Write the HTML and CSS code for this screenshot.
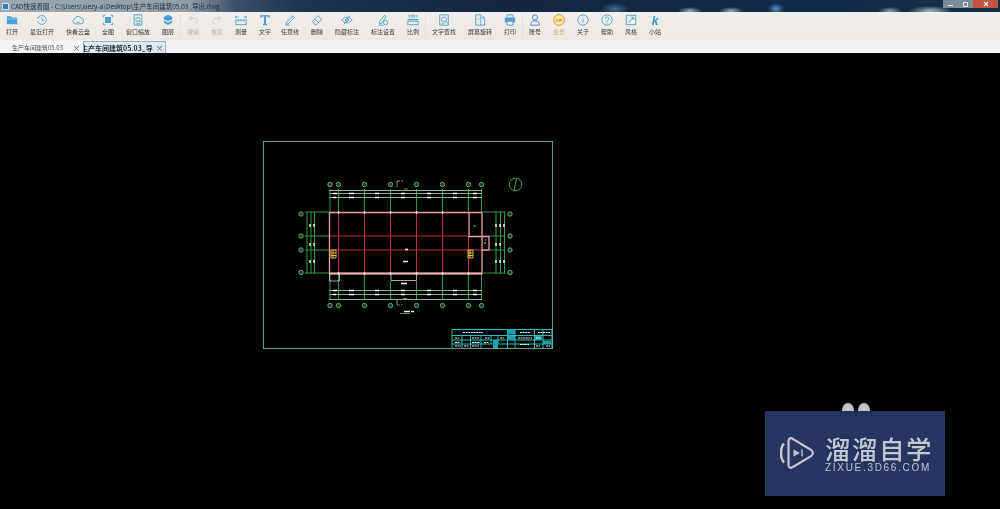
FILE: index.html
```html
<!DOCTYPE html>
<html lang="zh">
<head>
<meta charset="utf-8">
<title>CAD快速看图</title>
<link rel="stylesheet" href="styles.css">
</head>
<body>
<div class="app">
  <header class="titlebar">
    <span class="appicon"></span>
    <span class="titletext">CAD快速看图 - C:\Users\xiezy-a\Desktop\生产车间建筑05.03_导出.dwg</span>
    <div class="winctl"><span class="wbtn"><i class="glyphmin"></i></span><span class="wbtn"><i class="glyphmax"></i></span><span class="wbtn close"><svg class="glyphx" viewBox="0 0 6 6"><path d="M1 1l4 4M5 1L1 5"/></svg></span></div>
  </header>

  <nav class="toolbar">
    <div class="tool"><svg class="ic" viewBox="0 0 14 14"><path class="solid" d="M1 2.500h4.500L7 4h6v8H1z"/><path d="M1 5.800h12" class="lite"/></svg><span>打开</span></div>
    <div class="tool"><svg class="ic" viewBox="0 0 14 14"><path d="M2.300 4.500A5.200 5.200 0 1 1 1.800 8"/><path d="M1 3.500l1.200 1.500 1.600-1"/><path d="M7 4v3.400h2.600"/></svg><span>最近打开</span></div>
    <div class="tool"><svg class="ic" viewBox="0 0 14 14"><path d="M4 11.500a3 3 0 0 1-.6-5.900 3.800 3.800 0 0 1 7.300-.3 3.100 3.100 0 0 1-.2 6.200z"/><path d="M5 9c1 1.200 3 1.200 4 0"/></svg><span>快看云盘</span></div>
    <div class="tool"><svg class="ic" viewBox="0 0 14 14"><rect class="solid" x="3.500" y="3.500" width="7" height="7"/><path d="M1.500 4V1.500H4M10 1.500h2.500V4M12.500 10v2.500H10M4 12.500H1.500V10"/></svg><span>全图</span></div>
    <div class="tool"><svg class="ic" viewBox="0 0 14 14"><path d="M2.500 1h9v12h-9z"/><circle cx="7" cy="6.500" r="2.500"/><path d="M8.800 8.300l2 2M4.500 11.500h5"/></svg><span>窗口缩放</span></div>
    <div class="tool"><svg class="ic" viewBox="0 0 14 14"><path class="solid" d="M7 1l5 2.500V6L7 8.500 2 6V3.500z"/><path class="solid" d="M2 7.500l5 2.500 5-2.500V10l-5 2.800L2 10z"/></svg><span>图层</span></div>
    <i class="sep"></i>
    <div class="tool off"><svg class="ic" viewBox="0 0 14 14"><path d="M6 2L2.500 5 6 8"/><path d="M2.500 5H9a3 3 0 0 1 2.500 4.500L9.500 12"/></svg><span>撤销</span></div>
    <div class="tool off"><svg class="ic" viewBox="0 0 14 14"><path d="M8 2l3.500 3L8 8"/><path d="M11.500 5H5a3 3 0 0 0-2.500 4.500L4.500 12"/></svg><span>恢复</span></div>
    <div class="tool"><svg class="ic" viewBox="0 0 14 14"><path d="M1 2v3M13 2v3M1 3.500h3M10 3.500h3"/><rect x="1" y="7" width="12" height="5.500"/><path d="M4 7v2M7 7v2M10 7v2"/></svg><span>测量</span></div>
    <div class="tool"><svg class="ic" viewBox="0 0 14 14"><path class="solid" d="M1.500 1.500h11v3h-1.200l-.6-1.500H8.200v8.500l1.300.5V13H4.500v-1l1.300-.5V3H3.300l-.6 1.500H1.500z"/></svg><span>文字</span></div>
    <div class="tool narrow"><svg class="ic" viewBox="0 0 14 14"><path d="M3 9.500L10 2l2 2-7 7.500-2.500.8z"/><path d="M9 3.200l2 2M1.500 13h5"/></svg><span>任意线</span></div>
    <div class="tool gapped"><svg class="ic" viewBox="0 0 14 14"><path d="M1.800 8.500L8 2l4.500 4-6 6.500H4.500z"/><path d="M4.500 5.800L9 10"/></svg><span>删除</span></div>
    <div class="tool wide"><svg class="ic" viewBox="0 0 14 14"><path d="M1 7c3-4.500 9-4.500 12 0-3 4.500-9 4.500-12 0z"/><circle cx="7" cy="7" r="1.800"/><path d="M3.500 12L10.500 2"/></svg><span>隐藏标注</span></div>
    <div class="tool wide"><svg class="ic" viewBox="0 0 14 14"><path d="M3 9L8.500 1.500l2 1.500L6 10.500l-3 1z"/><circle cx="10" cy="10" r="2.500"/><path d="M1.500 13h6"/></svg><span>标注设置</span></div>
    <div class="tool"><svg class="ic" viewBox="0 0 14 14"><path d="M2.500 1v3M11.500 1v3M6 1.500h2M6 3.500h2M5 1v3M9 1v3"/><path class="thick" d="M1 6.500h12"/><rect x="1" y="8.500" width="12" height="4"/></svg><span>比例</span></div>
    <i class="sep"></i>
    <div class="tool wide"><svg class="ic" viewBox="0 0 14 14"><path d="M2 1h10v12H2z"/><circle cx="7" cy="6.500" r="3"/><path d="M9 8.800l2.400 2.400M4 11.500h3"/></svg><span>文字查找</span></div>
    <div class="tool wide"><svg class="ic" viewBox="0 0 14 14"><path d="M2 1h6v12H2z"/><path d="M8 4.500h4.500V13H8"/><path d="M4 6h2M10 2.500l1.500 1"/></svg><span>屏幕旋转</span></div>
    <div class="tool"><svg class="ic" viewBox="0 0 14 14"><path d="M3.500 4V1h7v3"/><rect class="solid" x="1" y="4" width="12" height="6" rx="1"/><path d="M3.500 8.500h7V13h-7z" class="paper"/></svg><span>打印</span></div>
    <i class="sep"></i>
    <div class="tool acct"><svg class="ic" viewBox="0 0 14 14"><circle cx="7" cy="4" r="3"/><path d="M1.800 13c0-3 1.500-5 5.200-5s5.200 2 5.200 5z"/></svg><span>账号</span></div>
    <div class="tool vip"><svg class="ic" viewBox="0 0 14 14"><circle cx="7" cy="7" r="6.300"/><text x="7" y="9" text-anchor="middle">VIP</text></svg><span>会员</span></div>
    <div class="tool"><svg class="ic" viewBox="0 0 14 14"><circle cx="7" cy="7" r="6"/><path d="M7 6v4.200M7 3.500v1"/></svg><span>关于</span></div>
    <div class="tool"><svg class="ic" viewBox="0 0 14 14"><circle cx="7" cy="7" r="6"/><path d="M5 5.500a2 2 0 1 1 3 1.700c-.7.400-1 .8-1 1.800M7 10v1"/></svg><span>帮助</span></div>
    <div class="tool"><svg class="ic" viewBox="0 0 14 14"><rect x="1.500" y="1.500" width="11" height="11"/><path d="M4 10l6-6M7 3.800h3.200V7"/></svg><span>风格</span></div>
    <div class="tool kay"><svg class="ic" viewBox="0 0 14 14"><text x="7" y="12.500" text-anchor="middle">k</text></svg><span>小站</span></div>
  </nav>

  <div class="tabs">
    <div class="tab"><span class="tabname">生产车间建筑05.03</span><span class="tabx">×</span></div>
    <div class="tab current"><span class="tabname">生产车间建筑05.03_导</span><span class="tabx">×</span></div>
  </div>

  <main class="canvas">
    <svg class="sheet" viewBox="0 53 1000 456" aria-hidden="true">
      <rect class="frame" x="263.500" y="141.500" width="289" height="207"/>

      <!-- axes -->
      <path class="axis" d="M330 189V212M338.500 189V212M364.500 189V212M390.500 189V212M416.500 189V212M442.500 189V212M468.500 189V212M481.500 189V212"/>
      <path class="axis" d="M330 274V300M338.500 274V300M364.500 274V300M390.500 281V300M416.500 281V300M442.500 274V300M468.500 274V300M481.500 274V300"/>
      <path class="axis" d="M305 212H329M305 236H329M305 250H329M305 273H329M483 212H505M490 236H505M490 250H505M483 273H505"/>
      <path class="axis" d="M307 212V274M311 212V274M314.500 212V274M496 212V274M500.500 212V274M504.500 212V274"/>
      <path class="dim" d="M329 190.500H482M329 193.500H482M329 197.500H482M329 290.500H482M329 294.500H482M329 299.500H482"/>
      <g class="bub">
        <circle cx="330" cy="184.500" r="2.200"/><circle cx="338.500" cy="184.500" r="2.200"/><circle cx="364.500" cy="184.500" r="2.200"/><circle cx="390.500" cy="184.500" r="2.200"/><circle cx="416.500" cy="184.500" r="2.200"/><circle cx="442.500" cy="184.500" r="2.200"/><circle cx="468.500" cy="184.500" r="2.200"/><circle cx="481.500" cy="184.500" r="2.200"/>
        <circle cx="330" cy="305.500" r="2.200"/><circle cx="338.500" cy="305.500" r="2.200"/><circle cx="364.500" cy="305.500" r="2.200"/><circle cx="390.500" cy="305.500" r="2.200"/><circle cx="416.500" cy="305.500" r="2.200"/><circle cx="442.500" cy="305.500" r="2.200"/><circle cx="468.500" cy="305.500" r="2.200"/><circle cx="481.500" cy="305.500" r="2.200"/>
        <circle cx="301" cy="214" r="2.200"/><circle cx="301" cy="236" r="2.200"/><circle cx="301" cy="250" r="2.200"/><circle cx="301" cy="272.500" r="2.200"/>
        <circle cx="510" cy="214" r="2.200"/><circle cx="510" cy="236" r="2.200"/><circle cx="510" cy="250" r="2.200"/><circle cx="510" cy="272.500" r="2.200"/>
      </g>
      <circle class="north" cx="515.500" cy="184.500" r="6.300"/>
      <path class="northmark" d="M514 190L516.500 179"/>

      <!-- white dimension ticks -->
      <path class="tick" d="M333 193.500h4M333 197.500h3M349 193.500h5M349 197.500h5M375 193.500h4M375 197.500h4M401 193.500h4M401 197.500h4M427 193.500h4M427 197.500h4M453 193.500h4M453 197.500h4M473 193.500h4M473 197.500h4"/>
      <path class="tick" d="M333 290.500h4M333 294.500h3M349 290.500h5M349 294.500h5M375 290.500h4M375 294.500h4M401 290.500h4M401 294.500h4M427 290.500h4M427 294.500h4M453 290.500h4M453 294.500h4M473 290.500h4M473 294.500h4"/>
      <path class="tick" d="M310 224v3M314 224v3M310 243v3M314 243v3M310 260v3M314 260v3M496 224v3M500 224v3M504 224v3M496 243v3M500 243v3M496 260v3M500 260v3M504 260v3"/>

      <!-- grid of the plan -->
      <path class="grid" d="M338.500 212V274M364.500 212V274M390.500 212V274M416.500 212V274M442.500 212V274M468.500 236V274M329 236H468M329 250H482"/>
      <path class="wall" d="M329.500 212.500H482V273.500H329.500Z"/>
      <path class="wallbase" d="M329 273.500H482"/>
      <path class="wall" d="M469 212.500V236.500H489V250H482"/>
      <path class="nodes" d="M338.500 211v3M364.500 211v3M390.500 211v3M416.500 211v3M442.500 211v3M338.500 272v3M364.500 272v3M390.500 272v3M416.500 272v3M442.500 272v3M468.500 272v3"/>
      <path class="wallthin" d="M329.500 274V281H339.500V274M391 274V280.500H416.500V274"/>
      <path class="stair" d="M331 250h5v8h-5zM333 250v8M331 253h5M331 255.500h5M468 250h5v8h-5zM470 250v8M468 253h5M468 255.500h5"/>
      <path class="note" d="M403 261.500h5M405 249.500h3M401 283.500h6M404 311.500h6M411 311.500h3"/>
      <path class="notedim" d="M473.500 226h2M484 243h2M485 240h1"/>
      <path class="section" d="M397 187v-6h3M402 180v2M397 300v5h3M402 304v1"/>
      <path class="underline" d="M404 189h4M403 298.500h4M400 313.500h10"/>

      <!-- title block -->
      <g class="block">
        <path d="M452 329.500H552V348M452 329.500V348M452 335.500H552M452 340H552M452 344H552M507.500 329.500V348M515 329.500V348M534.500 329.500V348M543 329.500V348M462 335.500V348M470.500 335.500V348M481 335.500V348M491 335.500V344M498 335.500V344"/>
      </g>
      <path class="blockfill" d="M507.500 329.500h7.500v5h-7.500zM507.500 336h7.500v4h-7.500zM493 340h5v8h-5zM534.500 336h7v4h-7zM543 341h8v3h-8z"/>
      <path class="blocktext" d="M463 332.500h20M520 332.500h10M538 332.500h12M472 338h7M485 338h5M500 338h4M518 338h14M472 342.500h8M484 342.500h5M455 338h4M455 342.500h5M455 346h6M464 346h5M472 346h7M520 344.500h9M536 338h6M546 346h4M536 346h4"/>
    </svg>

    <aside class="mark">
      <span class="ear left"></span><span class="ear right"></span>
      <svg class="marklogo" viewBox="0 0 34 32"><path class="marc" d="M4 6.500C1.500 9 1 12 1 16s.5 7 3 9.500"/><path d="M8.500 4c0-2.500 2-3.500 4-2.300l18.500 11.200c2.500 1.600 2.500 4.600 0 6.200L12.500 30.300c-2 1.200-4 .2-4-2.300z"/><path class="mfill" d="M13.500 12.500l6.500 3.500-6.500 3.500z"/><path class="mbar" d="M22 12.500v7"/></svg>
      <div class="marktext">
        <div class="markcn">溜溜自学</div>
        <div class="marken">ZIXUE.3D66.COM</div>
      </div>
    </aside>
  </main>
</div>
</body>
</html>
```
FILE: styles.css
```css
* { box-sizing: border-box; }
html, body { margin: 0; height: 100%; background: #000; overflow: hidden; }
body { font-family: "Noto Sans CJK SC", "Liberation Sans", sans-serif; }
.app { display: flex; flex-direction: column; width: 1000px; height: 509px; }

.titlebar {
  height: 12px; flex: none; display: flex; align-items: center; position: relative;
  padding-left: 2px; color: #2a3038; font-size: 6.5px; overflow: hidden;
  background:
    radial-gradient(ellipse 12px 4px at 690px 11px, #8fb1cf, transparent),
    radial-gradient(ellipse 12px 4px at 731px 11px, #8fb1cf, transparent),
    radial-gradient(ellipse 8px 6px at 776px 9px, #4f8fc4, transparent),
    radial-gradient(ellipse 12px 4px at 890px 11px, #7fa3bf, transparent),
    radial-gradient(ellipse 22px 5px at 930px 11px, #9dbdb8, transparent),
    radial-gradient(ellipse 14px 6px at 615px 9px, #3f6a90, transparent),
    linear-gradient(90deg, #9aa8b3 0, #8d9dab 190px, #3b4f68 235px, #1c3553 300px, #13263f 500px, #122a4a 800px, #182f4a 100%);
}
.appicon { width: 7px; height: 7px; background: #3a78b8; border: 1px solid #cfe0ee; flex: none; margin-right: 2px; }
.titletext { white-space: nowrap; filter: blur(.3px); }
.winctl { position: absolute; right: 2px; top: 0; height: 8px; display: flex; }
.wbtn { width: 15px; background: #7d8d98; display: flex; align-items: center; justify-content: center; }
.wbtn.close { width: 25px; background: #c4543f; }
.glyphmin { width: 5px; height: 1px; background: #eee; margin-top: 2px; }
.glyphmax { width: 5px; height: 5px; border: 1px solid #dde; }
.glyphx { width: 6px; height: 6px; fill: none; stroke: #f3f3f3; stroke-width: 1.200; }

.toolbar {
  height: 28px; flex: none; display: flex; align-items: flex-start;
  background: linear-gradient(#f2efeb, #ece9e4); filter: blur(.4px);
}
.tool { width: 24px; flex: none; display: flex; flex-direction: column; align-items: center; color: #33373c; font-size: 6px; line-height: 8px; white-space: nowrap; padding-top: 2px; }
.tool:nth-of-type(2), .tool:nth-of-type(3), .tool:nth-of-type(5), .tool.wide { width: 36px; }
.tool.narrow { width: 26px; }
.tool.gapped { margin-left: 2px; }
.sep { width: 1px; height: 24px; margin-top: 2px; background: #e3e0db; flex: none; }
.ic { width: 12px; height: 12px; margin-bottom: 2px; fill: none; stroke: #56a3cf; stroke-width: 1.100; flex: none; }
.ic .solid { fill: #4a9fd6; stroke: none; }
.ic .lite { stroke: #9acbe8; }
.ic .thick { stroke-width: 1.600; }
.ic .paper { fill: #f0ede8; }
.off { color: #b4b4b4; }
.off .ic { stroke: #cfcdca; }
.acct .ic { stroke: #4d83cb; }
.vip { color: #dcae6c; }
.vip .ic { stroke: #d99a33; }
.vip .ic circle { fill: #fbe6a8; }
.vip .ic text { font: bold 5px "Liberation Sans", sans-serif; fill: #c8801e; stroke: none; }
.kay .ic text { font: italic bold 14px "Liberation Sans", sans-serif; fill: #2f96d6; stroke: none; }

.tabs { height: 13px; flex: none; display: flex; align-items: flex-end; gap: 1px; padding-left: 1px; background: #f2f0f3; }
.tab { width: 81px; height: 12px; display: flex; align-items: center; padding: 0 1px 0 11px; font-size: 6px; color: #4a4a4a; background: #f6f5f6; overflow: hidden; filter: blur(.3px); }
.tab.current { width: 83px; padding-left: 0; font-size: 7px; color: #22303e; font-weight: 700; background: #dfe8f3; border: 1px solid #9db3c8; border-bottom: 0; }
.tabname { flex: 1; min-width: 0; overflow: hidden; white-space: nowrap; }
.tab.current .tabname { text-indent: -3px; }
.tabx { flex: none; width: 9px; text-align: center; font-size: 8px; font-weight: 400; color: #555; }

.canvas { flex: 1; position: relative; background: #000; overflow: hidden; }
.sheet { position: absolute; inset: 0; width: 1000px; height: 456px; fill: none; filter: blur(.55px); }
.frame { stroke: #669a90; stroke-width: 1.100; }
.axis { stroke: #2f9a3f; stroke-width: 1; }
.dim { stroke: #8aba8a; stroke-width: 1; }
.bub circle { stroke: #6fb876; stroke-width: .9; fill: #1e3a24; }
.north, .northmark { stroke: #4fb25a; stroke-width: .9; }
.tick { stroke: #fff; stroke-width: 1.400; }
.grid { stroke: #c02f40; stroke-width: 1; }
.wall { stroke: #f0a0aa; stroke-width: 1.300; }
.wallbase { stroke: #eab0ae; stroke-width: 2; }
.nodes { stroke: #f6dcdc; stroke-width: 1.400; }
.wallthin { stroke: #d9d2cc; stroke-width: .8; }
.stair { stroke: #e0ba3c; stroke-width: 1; }
.note { stroke: #eef4ee; stroke-width: 1.500; }
.notedim { stroke: #cfd8cf; stroke-width: 1; }
.section { stroke: #8f9a90; stroke-width: .9; }
.underline { stroke: #6fbf7a; stroke-width: .8; }
.block { stroke: #2ad0d0; stroke-width: .9; }
.blockfill { fill: #1ba3ae; }
.blocktext { stroke: #f0fafa; stroke-width: 1.200; stroke-dasharray: 2 .6; }

.mark { position: absolute; left: 765px; top: 358px; width: 180px; height: 85px; background: #24355f; display: flex; align-items: flex-start; gap: 11px; padding: 25px 0 0 15px; color: #c3c7d0; filter: blur(.3px); }
.ear { position: absolute; top: -8px; width: 12px; height: 16px; border-radius: 50%; background: #c4c4c2; clip-path: inset(0 0 8px 0); }
.ear.left { left: 77px; }
.ear.right { left: 93px; }
.marklogo { width: 34px; height: 32px; flex: none; fill: none; stroke: #c3c7d0; stroke-width: 2.200; margin-top: 1px; }
.marklogo .marc { stroke-width: 2.600; }
.marklogo .mfill { fill: #c3c7d0; stroke: none; }
.marklogo .mbar { stroke-width: 1.400; }
.marktext { display: flex; flex-direction: column; gap: 2px; margin-top: -1px; }
.markcn { font-size: 25.500px; line-height: 25px; letter-spacing: 1.500px; white-space: nowrap; font-weight: 500; }
.marken { font-family: "Liberation Sans", sans-serif; font-size: 10px; line-height: 11px; letter-spacing: 1.700px; white-space: nowrap; }
```
